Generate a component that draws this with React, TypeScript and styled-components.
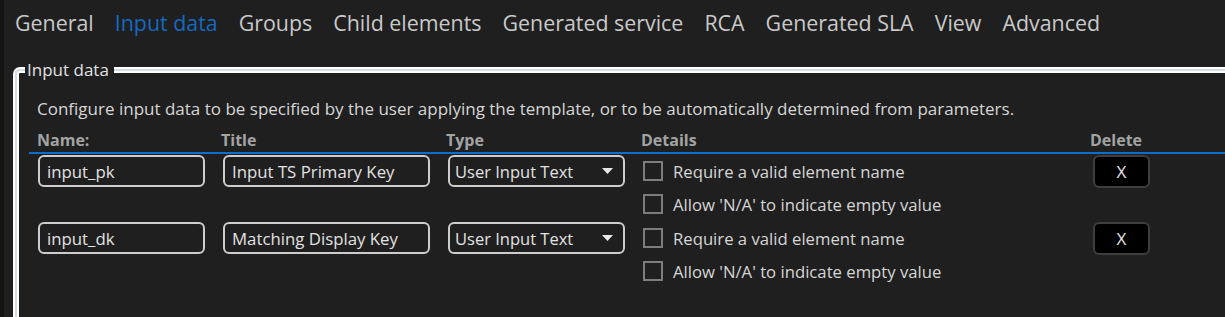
import React from 'react';
import styled, { createGlobalStyle } from 'styled-components';

const GlobalStyle = createGlobalStyle`
  html, body {
    margin: 0;
    padding: 0;
    background-color: #1f1f1f;
    overflow: hidden;
  }
  body {
    font-family: "Open Sans", "Noto Sans", "Liberation Sans", sans-serif;
    color: #d8d8d8;
  }
`;

const Page = styled.div`
  height: 317px;
  border-left: 4px solid #141414;
  box-sizing: border-box;
  overflow: hidden;
`;

const TabBar = styled.div`
  display: flex;
  gap: 21px;
  padding: 6px 0 0 11px;
  height: 67px;
  box-sizing: border-box;
`;

const Tab = styled.div<{ $active?: boolean }>`
  font-size: 21.4px;
  line-height: 34px;
  color: ${(p) => (p.$active ? '#1669c1' : '#c9c9c9')};
  white-space: nowrap;
`;

const GroupBox = styled.div`
  position: relative;
  margin: 0 -40px 0 9px;
  height: 300px;
  border: 2px solid #ffffff;
  border-top-left-radius: 7px;
  box-shadow: inset 0 0 0 2px #d4dce5, inset 0 0 0 4px #ffffff;
`;

const Legend = styled.div`
  position: absolute;
  top: -9px;
  left: 10px;
  padding: 0 5px 0 2px;
  background-color: #1f1f1f;
  font-size: 17px;
  line-height: 20px;
  color: #e2e2e2;
`;

const Content = styled.div`
  padding: 28px 0 0 14px;
`;

const Description = styled.div`
  padding-left: 8px;
  font-size: 17px;
  line-height: 24px;
  color: #d6d6d6;
  margin-bottom: 9px;
`;

const columns = '184px 225px 195px 449px 1fr';

const HeaderRow = styled.div`
  display: grid;
  grid-template-columns: ${columns};
  padding-left: 8px;
  border-bottom: 2px solid #0c6fc9;
  height: 22px;
`;

const HeaderCell = styled.div`
  font-size: 16px;
  font-weight: 700;
  line-height: 20px;
  color: #a3a3a3;
`;

const DataRow = styled.div`
  display: grid;
  grid-template-columns: ${columns};
  padding: 1px 0 0 8px;
  height: 66px;
  box-sizing: content-box;
`;

const TextBox = styled.input<{ $w: number; $ml: number }>`
  box-sizing: border-box;
  width: ${(p) => p.$w}px;
  height: 32px;
  margin-left: ${(p) => p.$ml}px;
  padding: 0 7px;
  background-color: #1f1f1f;
  border: 2px solid #cdcdcd;
  border-radius: 6px;
  color: #e2e2e2;
  font-family: inherit;
  font-size: 16.8px;
  outline: none;
`;

const Combo = styled.div`
  box-sizing: border-box;
  display: flex;
  align-items: center;
  justify-content: space-between;
  width: 177px;
  height: 32px;
  margin-left: 2px;
  padding: 0 10px 0 5px;
  border: 2px solid #cdcdcd;
  border-radius: 6px;
  color: #e2e2e2;
  font-size: 16.5px;
`;

const Details = styled.div`
  display: flex;
  flex-direction: column;
  margin-left: 2px;
`;

const CheckLine = styled.label`
  display: flex;
  align-items: center;
  gap: 10px;
  height: 33px;
  font-size: 16.7px;
  color: #d6d6d6;
`;

const CheckBox = styled.span`
  box-sizing: border-box;
  width: 20px;
  height: 20px;
  border: 2px solid #7d7d7d;
  margin-top: -1px;
`;

const DeleteButton = styled.button`
  box-sizing: border-box;
  width: 57px;
  height: 33px;
  margin-left: 3px;
  background-color: #000;
  border: 2px solid #3e3e3e;
  border-radius: 6px;
  color: #e6e6e6;
  font-family: inherit;
  font-size: 17px;
  padding: 0;
`;

const tabs = [
  'General',
  'Input data',
  'Groups',
  'Child elements',
  'Generated service',
  'RCA',
  'Generated SLA',
  'View',
  'Advanced',
];

const rows = [
  { name: 'input_pk', title: 'Input TS Primary Key' },
  { name: 'input_dk', title: 'Matching Display Key' },
];

const Arrow = () => (
  <svg width="11" height="6" viewBox="0 0 11 6">
    <path d="M0 0 L11 0 L5.5 6 Z" fill="#e8e8e8" />
  </svg>
);

const App: React.FC = () => (
  <Page>
    <GlobalStyle />
    <TabBar>
      {tabs.map((t) => (
        <Tab key={t} $active={t === 'Input data'}>
          {t}
        </Tab>
      ))}
    </TabBar>
    <GroupBox>
      <Legend>Input data</Legend>
      <Content>
        <Description>
          Configure input data to be specified by the user applying the template, or to be automatically determined
          from parameters.
        </Description>
        <HeaderRow>
          <HeaderCell>Name:</HeaderCell>
          <HeaderCell>Title</HeaderCell>
          <HeaderCell>Type</HeaderCell>
          <HeaderCell>Details</HeaderCell>
          <HeaderCell>Delete</HeaderCell>
        </HeaderRow>
        {rows.map((r) => (
          <DataRow key={r.name}>
            <TextBox $w={167} $ml={1} defaultValue={r.name} />
            <TextBox $w={207} $ml={2} defaultValue={r.title} />
            <Combo>
              <span>User Input Text</span>
              <Arrow />
            </Combo>
            <Details>
              <CheckLine>
                <CheckBox />
                Require a valid element name
              </CheckLine>
              <CheckLine>
                <CheckBox />
                Allow 'N/A' to indicate empty value
              </CheckLine>
            </Details>
            <div>
              <DeleteButton>X</DeleteButton>
            </div>
          </DataRow>
        ))}
      </Content>
    </GroupBox>
  </Page>
);

export default App;
